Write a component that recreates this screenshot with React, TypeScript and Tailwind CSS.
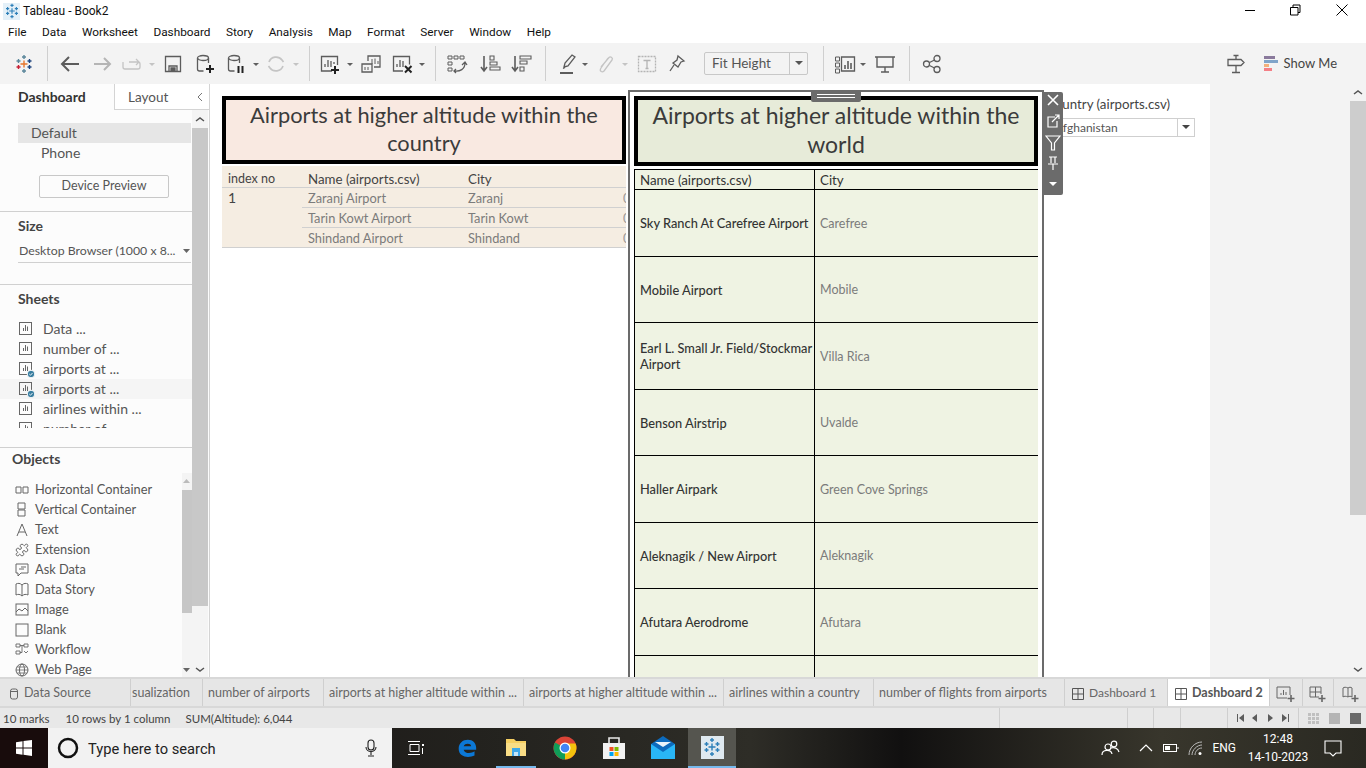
import React from "react";
import { Puzzle } from "lucide-react";

const S = ({ children, w = 22, className = "" }: { children: React.ReactNode; w?: number; className?: string }) => (
  <svg width={w} height={22} viewBox={`0 0 ${w} 22`} fill="none" stroke="currentColor" strokeWidth={1.3} className={"shrink-0 " + className}>{children}</svg>
);

const Caret = ({ ml, light }: { ml: string; light?: boolean }) => (
  <svg width="8" height="22" viewBox="0 0 8 22" className={"shrink-0 " + ml}><path d="M1 10h6l-3 3z" fill={light ? "#c4c4c4" : "#5f5f5f"} /></svg>
);
const Sep = ({ ml }: { ml: string }) => <div className={"w-px h-[35px] bg-[#cfcfcf] shrink-0 " + ml} />;

function TableauLogo({ size = 18, mono }: { size?: number; mono?: string }) {
  const c = mono ? [mono, mono, mono, mono, mono] : ["#e8762c", "#5b879b", "#c72035", "#1f447e", "#59879b"];
  return (
    <svg width={size} height={size} viewBox="0 0 20 20" className="shrink-0" strokeWidth={1.4}>
      <path d="M10 6.500v7M6.500 10h7" stroke={c[0]} />
      <path d="M10 1v4M8 3h4" stroke={c[1]} />
      <path d="M10 15v4M8 17h4" stroke={c[1]} />
      <path d="M4.500 5v4M2.500 7h4" stroke={c[4]} />
      <path d="M15.500 5v4M13.500 7h4" stroke={c[3]} />
      <path d="M4.500 11v4M2.500 13h4" stroke={c[2]} />
      <path d="M15.500 11v4M13.500 13h4" stroke={c[3]} />
    </svg>
  );
}

function TitleBar() {
  return (
    <div className="h-[22px] flex items-center bg-white shrink-0">
      <div className="ml-[3px] w-[17px] h-[17px] bg-[#e4f0f8] flex items-center justify-center"><TableauLogo size={16} mono="#2d7fb8" /></div>
      <span className="ml-[3px] text-[12px] text-[#111] font-[Roboto,sans-serif]">Tableau - Book2</span>
      <div className="ml-auto flex items-center text-black pb-[2px]">
        <svg width="12" height="12" viewBox="0 0 12 12" className="mr-[33px]" stroke="currentColor" fill="none"><path d="M0 6.500h10" /></svg>
        <svg width="12" height="12" viewBox="0 0 12 12" className="mr-[34px]" stroke="currentColor" fill="none"><path d="M.5 3.500h7.500v7.500H.5zM3 3.500V1h7v7.500H8" /></svg>
        <svg width="12" height="12" viewBox="0 0 12 12" className="mr-[18px]" stroke="currentColor" fill="none"><path d="M.5.5l11 11M11.500.5l-11 11" /></svg>
      </div>
    </div>
  );
}

function MenuBar() {
  return (
    <div className="h-[21px] flex items-center gap-[15.500px] pl-[8px] text-[11.800px] text-[#111] bg-white shrink-0 font-[Roboto,sans-serif]">
      {["File", "Data", "Worksheet", "Dashboard", "Story", "Analysis", "Map", "Format", "Server", "Window", "Help"].map((m) => (
        <span key={m}>{m}</span>
      ))}
    </div>
  );
}

function Toolbar() {
  return (
    <div className="h-[41px] bg-[#f3f3f3] flex items-center text-[#5c5c5c] shrink-0">
      <div className="ml-[13px] w-[22px] flex justify-center"><TableauLogo size={20} /></div>
      <Sep ml="ml-[12px]" />
      <S className="ml-[11px]"><path d="M20 11H4M10 4l-7 7 7 7" strokeWidth={2} /></S>
      <S className="ml-[10px] text-[#b5b5b5]"><path d="M3 11h16M13 5l6 6-6 6" strokeWidth={2} /></S>
      <S className="ml-[8px] text-[#c4c4c4]"><path d="M2 9v5a2 2 0 002 2h13a2 2 0 002-2v-3a2 2 0 00-2-2H8M15 6l3 3-3 3" /></S>
      <Caret ml="ml-[5px]" light />
      <S className="ml-[6px]"><path d="M3.500 3.500h15v15h-15zM7 18v-5h8v5" /><path d="M9 15h4v3H9z" fill="currentColor" /></S>
      <S className="ml-[10px]"><ellipse cx="9" cy="5" rx="5.500" ry="2.500" /><path d="M3.500 5v11a2 2 0 002 2h4M14.500 5v5" /><path d="M16 12v8M12 16h8" stroke="#222" strokeWidth={2} /></S>
      <S className="ml-[9px]"><ellipse cx="9" cy="5" rx="5.500" ry="2.500" /><path d="M3.500 5v11a2 2 0 002 2h4M14.500 5v5" /><path d="M13.500 13v7M17.500 13v7" stroke="#222" strokeWidth={2} /></S>
      <Caret ml="ml-[5px]" />
      <S className="ml-[5px] text-[#c4c4c4]"><path d="M4 9a7.500 7.500 0 0113-2l1.500 2M18 13a7.500 7.500 0 01-13 2l-1.500-2" strokeWidth={1.7} /></S>
      <Caret ml="ml-[5px]" light />
      <Sep ml="ml-[9px]" />
      <S className="ml-[9px]"><path d="M13 18H2.500V3.500h16V12" /><path d="M6 14v-3M9 14V7M12 14V8M15 11v-2" /><path d="M16 13v8M12 17h8" stroke="#222" strokeWidth={2} /></S>
      <Caret ml="ml-[5px]" />
      <S className="ml-[6px]"><path d="M8 8V3h12v11h-6" /><path d="M12 11V6M15 11V5.500M18 11V8" strokeWidth={1} /><path d="M2 11h10v8H2z" /><path d="M5 17v-3M8 17v-3" strokeWidth={1} /></S>
      <S className="ml-[9px]"><path d="M12 18H2.500V3.500h16v8" /><path d="M6 14v-3M9 14V7M12 14V8" /><path d="M14 13l6.500 6.500M20.500 13L14 19.500" stroke="#222" strokeWidth={2} /></S>
      <Caret ml="ml-[5px]" />
      <Sep ml="ml-[9px]" />
      <S className="ml-[10px]"><path d="M2 3h4v3H2zM8 3h4v3H8zM14 3h4v3h-4zM2 9h4v3H2zM2 15h4v3H2z" strokeWidth={1} /><path d="M8 18c6 1 11-2 11-8M16 12l3-3 2 3M10 16l-2 2 2 2" /></S>
      <S className="ml-[11px]"><path d="M5 3v14M2 14l3 4 3-4" strokeWidth={1.6} /><path d="M11 3h4v4h-4zM11 9h7v3h-7zM11 14h10v3H11z" strokeWidth={1.1} /></S>
      <S className="ml-[9px]"><path d="M5 3v14M2 14l3 4 3-4" strokeWidth={1.6} /><path d="M10 3h11v3H10zM10 8h7v3h-7zM10 14h4v4h-4z" strokeWidth={1.1} /></S>
      <Sep ml="ml-[13px]" />
      <S className="ml-[11px]"><path d="M7 14l1-4 7-8 3 2-7 9zM6 15.500l2-1" /><path d="M3 20h13" strokeWidth={2} /></S>
      <Caret ml="ml-[2px]" />
      <S className="ml-[5px] text-[#c4c4c4]"><path d="M14 5l-7 10c-2 3 1 5 3 3l8-11c1.500-2-1.500-4-3-2.500L7 14" /></S>
      <Caret ml="ml-[5px]" light />
      <S className="ml-[7px] text-[#b4b4b4]"><rect x="2.500" y="3.500" width="17" height="15" strokeDasharray="2 1" /><path d="M7.500 7.500h7M11 7.500v8M9.500 15.500h3" /></S>
      <S className="ml-[8px]"><path d="M12 3l6 5-3 1-3 5-5-4 4-3zM8 12l-4 6" /></S>
      <div className="ml-[16px] w-[104px] h-[23px] border border-[#c8c8c8] rounded-[2px] flex items-center shrink-0">
        <span className="ml-[7px] pb-[1px] text-[13.500px] text-[#555] font-[Lato,sans-serif] flex-1">Fit Height</span>
        <div className="w-[18px] h-full border-l border-[#c8c8c8] flex items-center justify-center"><svg width="8" height="5"><path d="M0 0h8L4 4z" fill="#555" /></svg></div>
      </div>
      <Sep ml="ml-[15px]" />
      <S className="ml-[10px]"><path d="M1.500 4h4v4h-4zM1.500 10h4v4h-4zM1.500 16h4v4h-4z" strokeWidth={1} /><path d="M7.500 4h13v14h-13z" /><path d="M11 16v-4M14 16V8M17 16v-6" strokeWidth={1.6} /></S>
      <Caret ml="ml-[3px]" />
      <S className="ml-[7px]"><path d="M1 4h20M3 4v10h16V4M11 14v5M7 19h8" strokeWidth={1.4} /></S>
      <Sep ml="ml-[13px]" />
      <S className="ml-[11px]"><circle cx="5.500" cy="11" r="3" /><circle cx="16" cy="5.500" r="3" /><circle cx="16" cy="16.500" r="3" /><path d="M8.500 9.500l5-2.500M8.500 12.500l5 2.500" /></S>
      <S className="ml-auto"><path d="M11 19v-6M7 19.500h8M3 6.500h13l3 3-3 3H3zM11 6.500V2.500M8.500 2.500h5" /></S>
      <svg width="14" height="22" viewBox="0 0 14 22" className="ml-[17px] shrink-0">
        <rect x="0" y="3" width="11" height="3" fill="#8a7a9c" />
        <rect x="0" y="7" width="14" height="3" fill="#80a4c9" />
        <rect x="0" y="11" width="5" height="3" fill="#f2b07c" />
        <rect x="0" y="15" width="8" height="3" fill="#f47f86" />
      </svg>
      <span className="ml-[6px] mr-[29px] text-[13px] text-[#444] font-[Lato,sans-serif]">Show Me</span>
    </div>
  );
}

const SheetIcon = ({ check }: { check?: boolean }) => (
  <svg width="20" height="20" viewBox="0 0 20 20" className="shrink-0" fill="none" stroke="#666">
    <rect x="3.500" y="3.500" width="12" height="12" />
    <path d="M7.500 12V9M9.500 12V6M11.500 12V7.500" />
    {check && <><circle cx="15" cy="15" r="3.800" fill="#3a7ea0" stroke="#fcfcfc" /><path d="M13.300 15l1.200 1.200 2-2.200" stroke="#fff" strokeWidth={0.9} /></>}
  </svg>
);

const objectIcons: Record<string, React.ReactNode> = {
  "Horizontal Container": <><path d="M2 6h5v6H2zM9 6h5v6H9z" /></>,
  "Vertical Container": <><path d="M4 2h7v6H4zM4 9h7v6H4z" /></>,
  Text: <path d="M3 15L8 3l5 12M5 11h6" />,
  Extension: <Puzzle x={1} y={2} width={14} height={14} strokeWidth={1.5} />,
  "Ask Data": <><path d="M2 3h12v9H7l-3 3v-3H2z" /><path d="M7 6h5M5 8h5" /></>,
  "Data Story": <path d="M8 4c-2-2-4-2-6-1v11c2-1 4-1 6 1 2-2 4-2 6-1V3c-2-1-4-1-6 1zM8 4v11" />,
  Image: <><rect x="2" y="3" width="12" height="11" /><path d="M2 11l3-3 3 2 3-3 3 3" /></>,
  Blank: <rect x="2" y="3" width="12" height="12" />,
  Workflow: <><path d="M2 3h4v3H2zM10 3h4v3h-4zM2 10h4v3H2zM6 4.500h4M8 4.500v7H6M10 10l2 2 2-2" strokeWidth={0.9} /></>,
  "Web Page": <><circle cx="8" cy="9" r="6" /><ellipse cx="8" cy="9" rx="2.500" ry="6" /><path d="M2 9h12M3 6h10M3 12h10" strokeWidth={0.8} /></>,
};

function Sidebar() {
  return (
    <div className="w-[210px] shrink-0 border-r border-[#d4d4d4] bg-[#fcfcfc] flex flex-col text-[13px] text-[#555] font-[Lato,sans-serif] overflow-hidden">
      <div className="h-[26px] flex shrink-0">
        <div className="w-[114px] pl-[18px] pb-[1px] flex items-center font-bold text-[14px] text-[#333]">Dashboard</div>
        <div className="flex-1 border-l border-b border-[#d4d4d4] bg-white flex items-center pl-[13px] text-[13.500px] text-[#555]"><span className="pt-[1px]">Layout</span>
          <svg width="8" height="12" viewBox="0 0 8 12" className="ml-auto mr-[5px]" fill="none" stroke="#777"><path d="M6 2L2 6l4 4" /></svg>
        </div>
      </div>
      <div className="flex flex-1 min-h-0">
        <div className="w-[192px] shrink-0 flex flex-col min-h-0">
          <div className="h-[13px] shrink-0" />
          <div className="ml-[18px] w-[173px] h-[20px] bg-[#e6e6e6] flex items-center pl-[13px] pb-[2px] text-[14px] shrink-0">Default</div>
          <div className="ml-[41px] h-[20px] flex items-center pb-[2px] text-[14px] shrink-0">Phone</div>
          <div className="ml-[39px] mt-[12px] w-[130px] h-[23px] border border-[#c8c8c8] rounded-[2px] flex items-center justify-center text-[12.500px] shrink-0">Device Preview</div>
          <div className="mt-[13px] h-px bg-[#d0d0d0] shrink-0" />
          <div className="ml-[18px] mt-[5px] h-[17px] flex items-center font-bold text-[14px] text-[#444] shrink-0">Size</div>
          <div className="ml-[18px] mr-[1px] mt-[7px] h-[22px] border-b border-[#d0d0d0] flex items-center justify-between pl-px text-[12.300px] shrink-0">
            <span>Desktop Browser (1000 x 8...</span>
            <svg width="8" height="5"><path d="M0 0h7L3.500 4z" fill="#666" /></svg>
          </div>
          <div className="mt-[21px] h-px bg-[#d0d0d0] shrink-0" />
          <div className="ml-[18px] mt-[5px] h-[17px] flex items-center font-bold text-[14px] text-[#444] shrink-0">Sheets</div>
          <div className="h-[129px] mt-[12px] shrink-0 overflow-hidden border-b border-[#d0d0d0]">
            <div className="h-[109px] overflow-hidden">
              {["Data ...", "number of ...", "airports at ...", "airports at ...", "airlines within ...", "number of ..."].map((t, i) => (
                <div key={i} className={"h-[20px] flex items-center pl-[16px] gap-[7px] text-[14px] " + (i === 3 ? "bg-[#f5f5f5]" : "")}>
                  <SheetIcon check={i === 2 || i === 3} />
                  <span className="pb-[2px]">{t}</span>
                </div>
              ))}
            </div>
          </div>
          <div className="ml-[12px] mt-[2px] h-[17px] flex items-center font-bold text-[14px] text-[#444] shrink-0">Objects</div>
          <div className="flex flex-1 min-h-0 mt-[6px]">
            <div className="w-[182px] shrink-0 pt-[7px] overflow-hidden">
              {Object.keys(objectIcons).map((k) => (
                <div key={k} className="h-[20px] flex items-center pl-[14px] gap-[5px] text-[12.800px]">
                  <svg width="16" height="18" viewBox="0 0 16 18" className="shrink-0" fill="none" stroke="#666">{objectIcons[k]}</svg>
                  <span>{k}</span>
                </div>
              ))}
            </div>
            <div className="w-[10px] flex flex-col bg-[#f4f4f4] shrink-0">
              <div className="h-[17px] flex items-center justify-center shrink-0"><svg width="8" height="5"><path d="M0 4h7L3.500 0z" fill="#bbb" /></svg></div>
              <div className="h-[123px] bg-[#c6c6c6] shrink-0" />
              <div className="flex-1" />
              <div className="h-[14px] flex items-center justify-center shrink-0"><svg width="8" height="5"><path d="M0 0h7L3.500 4z" fill="#666" /></svg></div>
            </div>
          </div>
        </div>
        <div className="w-[16px] flex flex-col shrink-0 bg-[#f4f4f4]">
          <div className="h-[18px] flex items-center justify-center shrink-0"><svg width="10" height="7" fill="none" stroke="#555" strokeWidth={1.5}><path d="M1 5l4-3 4 3" /></svg></div>
          <div className="h-[478px] bg-[#c8c8c8] shrink-0" />
          <div className="flex-1" />
          <div className="h-[16px] flex items-center justify-center shrink-0"><svg width="10" height="7" fill="none" stroke="#555" strokeWidth={1.5}><path d="M1 2l4 3 4-3" /></svg></div>
        </div>
      </div>
    </div>
  );
}

const leftRows = [["Zaranj Airport", "Zaranj"], ["Tarin Kowt Airport", "Tarin Kowt"], ["Shindand Airport", "Shindand"]];
const worldRows: [string[], string, string][] = [
  [["Sky Ranch At Carefree Airport"], "Carefree", "h-[67px]"],
  [["Mobile Airport"], "Mobile", "h-[66px]"],
  [["Earl L. Small Jr. Field/Stockmar", "Airport"], "Villa Rica", "h-[67px]"],
  [["Benson Airstrip"], "Uvalde", "h-[66px]"],
  [["Haller Airpark"], "Green Cove Springs", "h-[67px]"],
  [["Aleknagik / New Airport"], "Aleknagik", "h-[66px]"],
  [["Afutara Aerodrome"], "Afutara", "h-[67px]"],
  [[""], "", "h-[66px]"],
];

function LeftSheet() {
  return (
    <div className="ml-[12px] w-[404px] shrink-0 pt-[12px]">
      <div className="h-[68px] border-4 border-black bg-[#f9e9e1] flex items-center justify-center text-center text-[21.800px] leading-[28px] text-[#3b3b3b] px-[8px] pb-[2px]">
        <span>Airports at higher altitude within the<br />country</span>
      </div>
      <div className="mt-[2px] bg-[#f5ede2] border-b border-[#d0d0d0] overflow-hidden">
        <div className="h-[20px] mt-[2px] pt-[4px] border-b border-[#d0d0d0] flex items-center text-[#444] text-[13.300px]">
          <span className="w-[80px] pl-[6px] text-[12.500px]">index no</span>
          <span className="w-[160px] pl-[6px]">Name (airports.csv)</span>
          <span className="pl-[6px]">City</span>
        </div>
        <div className="flex text-[12.800px]">
          <span className="w-[80px] pl-[6px] pt-[1px] text-[14px] leading-[18px] text-[#444]">1</span>
          <div className="flex-1 text-[#7b7b7b]">
            {leftRows.map((r, i) => (
              <div key={i} className={"flex items-center pt-[2px] " + (i < 2 ? "h-[20px] border-b border-[#d0d0d0]" : "h-[19px]")}>
                <span className="w-[160px] pl-[6px]">{r[0]}</span>
                <span className="pl-[6px] flex-1">{r[1]}</span>
                <span className="text-[#999] w-[3px] overflow-hidden">0</span>
              </div>
            ))}
          </div>
        </div>
      </div>
    </div>
  );
}

function Frame() {
  return (
    <div className="ml-[2px] w-[416px] h-[600px] mt-[6px] shrink-0 border-2 border-[#6b6b6b] bg-white relative z-10 pl-[4px] pt-[4px]">
      <div className="absolute -top-[2px] left-[181px] w-[50px] h-[12px] bg-[#6b6b6b] rounded-b-[2px] flex flex-col items-center justify-center gap-[2px]">
        <div className="w-[38px] h-px bg-white" />
        <div className="w-[38px] h-px bg-white" />
      </div>
      <div className="w-[404px] h-[70px] border-4 border-black bg-[#e7ebd9] flex items-center justify-center text-center text-[23px] leading-[29px] text-[#3b3b3b] pb-[3px]">
        <span>Airports at higher altitude within the<br />world</span>
      </div>
      <div className="w-[404px] mt-[3px] bg-[#eff3e3] border-t border-l border-black text-[12.800px]">
        <div className="h-[20px] border-b border-black flex items-center text-[#333] text-[13.300px]">
          <span className="w-[180px] h-full border-r border-black pl-[5px] pt-[3px] flex items-center">Name (airports.csv)</span>
          <span className="pl-[5px] pt-[3px]">City</span>
        </div>
        {worldRows.map((r, i) => (
          <div key={i} className={"flex items-center border-b border-black " + r[2]}>
            <div className="w-[180px] h-full border-r border-black pl-[5px] flex items-center text-[#333] font-medium leading-[16px] whitespace-nowrap overflow-hidden">
              <span>{r[0].map((l, j) => <React.Fragment key={j}>{j > 0 && <br />}{l}</React.Fragment>)}</span>
            </div>
            <span className="pl-[5px] pt-[2px] text-[#7b7b7b] text-[12.500px]">{r[1]}</span>
          </div>
        ))}
      </div>
      <div className="absolute top-0 left-[413px] w-[20px] h-[103px] bg-[#6b6b6b] rounded-r-[2px] flex flex-col items-center pt-[1px]">
        <svg width="14" height="14" viewBox="0 0 14 14" fill="none" stroke="#fff" strokeWidth={1.6}><path d="M2 2l10 10M12 2L2 12" /></svg>
        <svg width="14" height="14" viewBox="0 0 14 14" className="mt-[7px]" fill="none" stroke="#fff" strokeWidth={1.2}><path d="M9 3H2v10h9V7M6 8l7-7M9 1h4v4" /></svg>
        <svg width="16" height="16" viewBox="0 0 16 16" className="mt-[7px]" fill="none" stroke="#fff" strokeWidth={1.2}><path d="M1 1h14L9.500 8v7h-3V8z" /></svg>
        <svg width="14" height="14" viewBox="0 0 14 14" className="mt-[5px]" fill="none" stroke="#fff" strokeWidth={1.2}><path d="M3 1h8M5 1v6M9 1v6M2 8h10M7 8v6" /></svg>
        <svg width="10" height="6" className="mt-[11px]"><path d="M1 1h8L5 5z" fill="#fff" /></svg>
      </div>
    </div>
  );
}

function FilterPanel() {
  return (
    <div className="ml-[2px] pt-[12px] w-[149px] shrink-0 text-[13.300px] text-[#444]">
      <div className="h-[18px] flex items-center whitespace-nowrap">Country (airports.csv)</div>
      <div className="mt-[4px] h-[19px] border border-[#cfcfcf] flex items-center text-[12px] text-[#555]">
        <span className="ml-[8px] flex-1">Afghanistan</span>
        <div className="w-[17px] h-full border-l border-[#cfcfcf] flex items-center justify-center"><svg width="8" height="5"><path d="M0 0h8L4 4z" fill="#444" /></svg></div>
      </div>
    </div>
  );
}

function RightGutter() {
  return (
    <div className="w-[156px] shrink-0 bg-[#f3f3f3] flex justify-end">
      <div className="w-[16px] flex flex-col">
        <div className="h-[17px] flex items-center justify-center shrink-0"><svg width="10" height="7" fill="none" stroke="#555" strokeWidth={1.5}><path d="M1 5l4-3 4 3" /></svg></div>
        <div className="h-[414px] bg-[#cdcdcd] shrink-0" />
        <div className="flex-1" />
        <div className="h-[16px] flex items-center justify-center shrink-0"><svg width="10" height="7" fill="none" stroke="#555" strokeWidth={1.5}><path d="M1 2l4 3 4-3" /></svg></div>
      </div>
    </div>
  );
}

const Tab = ({ w, children, cls = "" }: { w: string; children: React.ReactNode; cls?: string }) => (
  <div className={"h-full pt-[2px] flex items-center border-r border-[#cfcfcf] shrink-0 whitespace-nowrap overflow-hidden " + w + " " + cls}>{children}</div>
);

const GridIcon = () => (
  <svg width="12" height="12" viewBox="0 0 12 12" fill="none" stroke="#555" className="shrink-0"><path d="M.5.5h11v11H.5zM6 .5v11M.5 6h11" /></svg>
);

function Tabs() {
  return (
    <div className="h-[31px] border-t-2 border-b-2 border-[#d8d8d8] bg-[#e6e6e6] flex items-center text-[12.500px] text-[#666] font-[Lato,sans-serif] shrink-0">
      <Tab w="w-[131px]" cls="pl-[9px]">
        <svg width="10" height="12" viewBox="0 0 10 12" fill="none" stroke="#666"><rect x="1.500" y="1" width="7" height="10" rx="2" /><path d="M1.500 3.500h7" /></svg>
        <span className="ml-[5px]">Data Source</span>
      </Tab>
      <Tab w="w-[72px]" cls="pl-[1px]">sualization</Tab>
      <Tab w="w-[121px]" cls="pl-[5px]">number of airports</Tab>
      <Tab w="w-[200px]" cls="pl-[5px]">airports at higher altitude within ...</Tab>
      <Tab w="w-[200px]" cls="pl-[5px]">airports at higher altitude within ...</Tab>
      <Tab w="w-[150px]" cls="pl-[5px]">airlines within a country</Tab>
      <Tab w="w-[191px]" cls="pl-[5px]">number of flights from airports</Tab>
      <Tab w="w-[103px]" cls="pl-[7px] gap-[5px] text-[12px]"><GridIcon /><span className="pb-[1px]">Dashboard 1</span></Tab>
      <Tab w="w-[102px]" cls="pl-[7px] gap-[5px] bg-white font-bold text-[#555]"><GridIcon /><span>Dashboard 2</span></Tab>
      <Tab w="w-[33px]" cls="justify-center">
        <svg width="22" height="18" viewBox="0 0 22 18" fill="none" stroke="#666"><path d="M12 13H2V2h13v8M6 10V8M8.500 10V5M11 10V7" /><path d="M16 10v7M12.500 13.500h7" strokeWidth={1.6} /></svg>
      </Tab>
      <Tab w="w-[31px]" cls="justify-center">
        <svg width="20" height="18" viewBox="0 0 20 18" fill="none" stroke="#666"><path d="M11 12H2V2h11v7M7.500 2v10M2 7h11" /><path d="M14 10v7M10.500 13.500h7" strokeWidth={1.6} /></svg>
      </Tab>
      <div className="flex-1 flex justify-center pt-[2px]">
        <svg width="18" height="18" viewBox="0 0 18 18" fill="none" stroke="#666"><path d="M7 3C5 2 3 2 2 3v9c1-1 3-1 5 0 1-1 3-1 4 0V3c-1-1-3-1-4 0zM7 3v9" /><path d="M14 10v7M10.500 13.500h7" strokeWidth={1.6} /></svg>
      </div>
    </div>
  );
}

function StatusBar() {
  return (
    <div className="h-[20px] bg-[#e8e8e8] flex items-center text-[11.500px] text-[#444] font-[Lato,sans-serif] shrink-0">
      <span className="ml-[3px] pt-[1px]">10 marks</span>
      <span className="ml-[16px] pt-[1px]">10 rows by 1 column</span>
      <span className="ml-[15px] pt-[1px]">SUM(Altitude): 6,044</span>
      <div className="ml-auto w-[128px] h-full border-l border-[#cfcfcf]" />
      <div className="w-[26px] h-full border-l border-[#cfcfcf]" />
      <div className="w-[27px] h-full border-l border-[#cfcfcf]" />
      <div className="w-[47px] h-full border-l border-[#cfcfcf]" />
      <div className="w-[71px] h-full border-l border-[#cfcfcf] flex items-center pl-[8px]">
        <svg width="60" height="10" viewBox="0 0 60 10" fill="#5c5c5c">
          <path d="M1 1h1v8H1zM8 1L3 5l5 4zM21 1l-5 4 5 4zM32 1l5 4-5 4zM46 1l5 4-5 4zM52 1h1v8h-1z" />
        </svg>
      </div>
      <div className="w-[68px] h-full border-l border-[#cfcfcf] flex items-center pl-[9px] gap-[10px]">
        <div className="grid grid-cols-3 gap-px w-[11px]">{Array.from({ length: 9 }).map((_, i) => <div key={i} className="h-[3px] bg-[#c0c0c0]" />)}</div>
        <div className="w-[11px] h-[11px] bg-[#b4b4b4]" />
        <div className="w-[11px] h-[11px] bg-[#6a6a6a]" />
      </div>
    </div>
  );
}

function Taskbar() {
  return (
    <div className="h-[40px] bg-[linear-gradient(90deg,#141010_0%,#24231f_37%,#2e2d27_55%,#111010_66%,#38362c_85%,#2a2922_100%)] flex items-center text-white shrink-0 overflow-hidden">
      <div className="w-[48px] h-full bg-[#180c0c] flex items-center justify-center shrink-0">
        <svg width="16" height="16" viewBox="0 0 16 16" fill="#fff"><path d="M0 2.200l6.500-1v6.400H0zM7.500 1l8.500-1v7.600H7.500zM0 8.500h6.500v6.300L0 13.800zM7.500 8.500H16V16l-8.500-1.200z" /></svg>
      </div>
      <div className="w-[344px] h-full bg-[#f2f2f2] flex items-center text-[#222] shrink-0">
        <svg width="22" height="22" viewBox="0 0 22 22" className="ml-[9px]" fill="none" stroke="#111" strokeWidth={2.500}><circle cx="11" cy="11" r="9" /></svg>
        <span className="ml-[9px] pt-[3px] text-[14.700px] font-[Roboto,sans-serif]">Type here to search</span>
        <svg width="12" height="18" viewBox="0 0 12 18" className="ml-auto mr-[15px]" fill="none" stroke="#222" strokeWidth={1.1}><rect x="3" y="1" width="6" height="10" rx="3" /><path d="M1 8c0 6 10 6 10 0M6 13v3M3 17h6" /></svg>
      </div>
      <svg width="16" height="16" viewBox="0 0 16 16" className="ml-[16px] shrink-0" fill="none" stroke="#fff"><path d="M2 4.500h9v7H2zM0 1.500h12M0 14.500h12" /><path d="M14 4h2v2h-2z" fill="#fff" stroke="none" /><path d="M14.500 8v6" /></svg>
      <svg width="20" height="22" viewBox="0 0 24 24" className="ml-[33px] shrink-0"><path d="M2 13C2 6 7 2 13 2c6 0 10 4 10 10v2H8c1 5 9 5 13 2v5c-6 3-19 3-19-8zM8 10h9c0-4-8-4-9 0z" fill="#0c78d6" /></svg>
      <div className="ml-[19px] w-[40px] h-full border-b-2 border-[#76b9ed] flex items-center justify-center shrink-0">
        <svg width="22" height="20" viewBox="0 0 22 20"><path d="M1 2h8l2 2h10v15H1z" fill="#f6cf62" /><path d="M1 6h20v13H1z" fill="#f9dd86" /><path d="M7 11h8v8H7z" fill="#3fa8e8" /><path d="M9 15h4v4H9z" fill="#fff" opacity=".7" /></svg>
      </div>
      <svg width="24" height="24" viewBox="0 0 24 24" className="ml-[17px] shrink-0">
        <circle cx="12" cy="12" r="11.500" fill="#db4437" />
        <path d="M12 12L2 6.500A11.500 11.500 0 0012 23.500z" fill="#0f9d58" />
        <path d="M12 12v11.500A11.500 11.500 0 0022.500 7.500H12z" fill="#f4c20d" />
        <circle cx="12" cy="12" r="5.500" fill="#fff" /><circle cx="12" cy="12" r="4.300" fill="#4285f4" />
      </svg>
      <svg width="24" height="24" viewBox="0 0 24 24" className="ml-[25px] shrink-0" fill="none">
        <path d="M1 7h22v16H1z" fill="#f2f2f2" /><path d="M7 8V2h10v6" stroke="#e8e8e8" strokeWidth={1.6} />
        <path d="M7.500 11h4v4h-4z" fill="#f25022" /><path d="M12.500 11h4v4h-4z" fill="#7fba00" /><path d="M7.500 16h4v4h-4z" fill="#00a4ef" /><path d="M12.500 16h4v4h-4z" fill="#ffb900" />
      </svg>
      <svg width="24" height="24" viewBox="0 0 24 24" className="ml-[25px] shrink-0"><path d="M0 8l12-8 12 8v15H0z" fill="#0c6bbd" /><path d="M0 8l12 8 12-8v15H0z" fill="#29b6f6" /><path d="M4 6h16l-8 5z" fill="#e8f3fa" /></svg>
      <div className="ml-[13px] w-[48px] h-full bg-[#55554f] border-b-2 border-[#76b9ed] flex items-center justify-center shrink-0">
        <div className="w-[23px] h-[23px] bg-[#dfe9f0] flex items-center justify-center"><TableauLogo size={20} mono="#2d7fb8" /></div>
      </div>
      <div className="ml-auto flex items-center h-full">
        <svg width="20" height="18" viewBox="0 0 20 18" fill="none" stroke="#fff" strokeWidth={1.200}><circle cx="7" cy="8" r="3" /><circle cx="13" cy="5" r="2.800" /><path d="M1 16c0-6 9-6 10-1M10 9c3-1 7 0 8 4" /></svg>
        <svg width="14" height="8" viewBox="0 0 14 8" className="ml-[18px]" fill="none" stroke="#fff" strokeWidth={1.200}><path d="M1 7l6-6 6 6" /></svg>
        <svg width="16" height="10" viewBox="0 0 16 10" className="ml-[10px]" fill="none" stroke="#fff"><rect x=".5" y="1.500" width="13" height="7" /><rect x="2" y="3" width="5" height="4" fill="#fff" stroke="none" /><path d="M15 4v2" /></svg>
        <svg width="15" height="15" viewBox="0 0 15 15" className="ml-[9px]" fill="none" stroke="#bbb"><path d="M1 14C1 7 7 1 14 1M4 14c0-5 5-10 10-10M7 14c0-3.500 3-7 7-7" /><circle cx="12" cy="12.500" r="1.500" fill="#fff" stroke="none" /></svg>
        <span className="ml-[9px] text-[12px] font-[Roboto,sans-serif]">ENG</span>
        <div className="ml-[7px] w-[70px] text-center text-[12px] leading-[18px] font-[Roboto,sans-serif] whitespace-nowrap"><div>12:48</div><div>14-10-2023</div></div>
        <svg width="18" height="18" viewBox="0 0 18 18" className="ml-[11px] mr-[24px]" fill="none" stroke="#fff" strokeWidth={1.100}><path d="M1 2h16v12h-5l-3 3-3-3H1z" /></svg>
      </div>
    </div>
  );
}

export default function App() {
  return (
    <div className="w-[1366px] h-[768px] flex flex-col overflow-hidden bg-white font-['Open_Sans',sans-serif]">
      <TitleBar />
      <MenuBar />
      <Toolbar />
      <div className="h-[593px] flex shrink-0 overflow-hidden">
        <Sidebar />
        <div className="w-[1000px] shrink-0 bg-white flex font-[Lato,sans-serif]">
          <LeftSheet />
          <Frame />
          <FilterPanel />
        </div>
        <RightGutter />
      </div>
      <Tabs />
      <StatusBar />
      <Taskbar />
    </div>
  );
}
